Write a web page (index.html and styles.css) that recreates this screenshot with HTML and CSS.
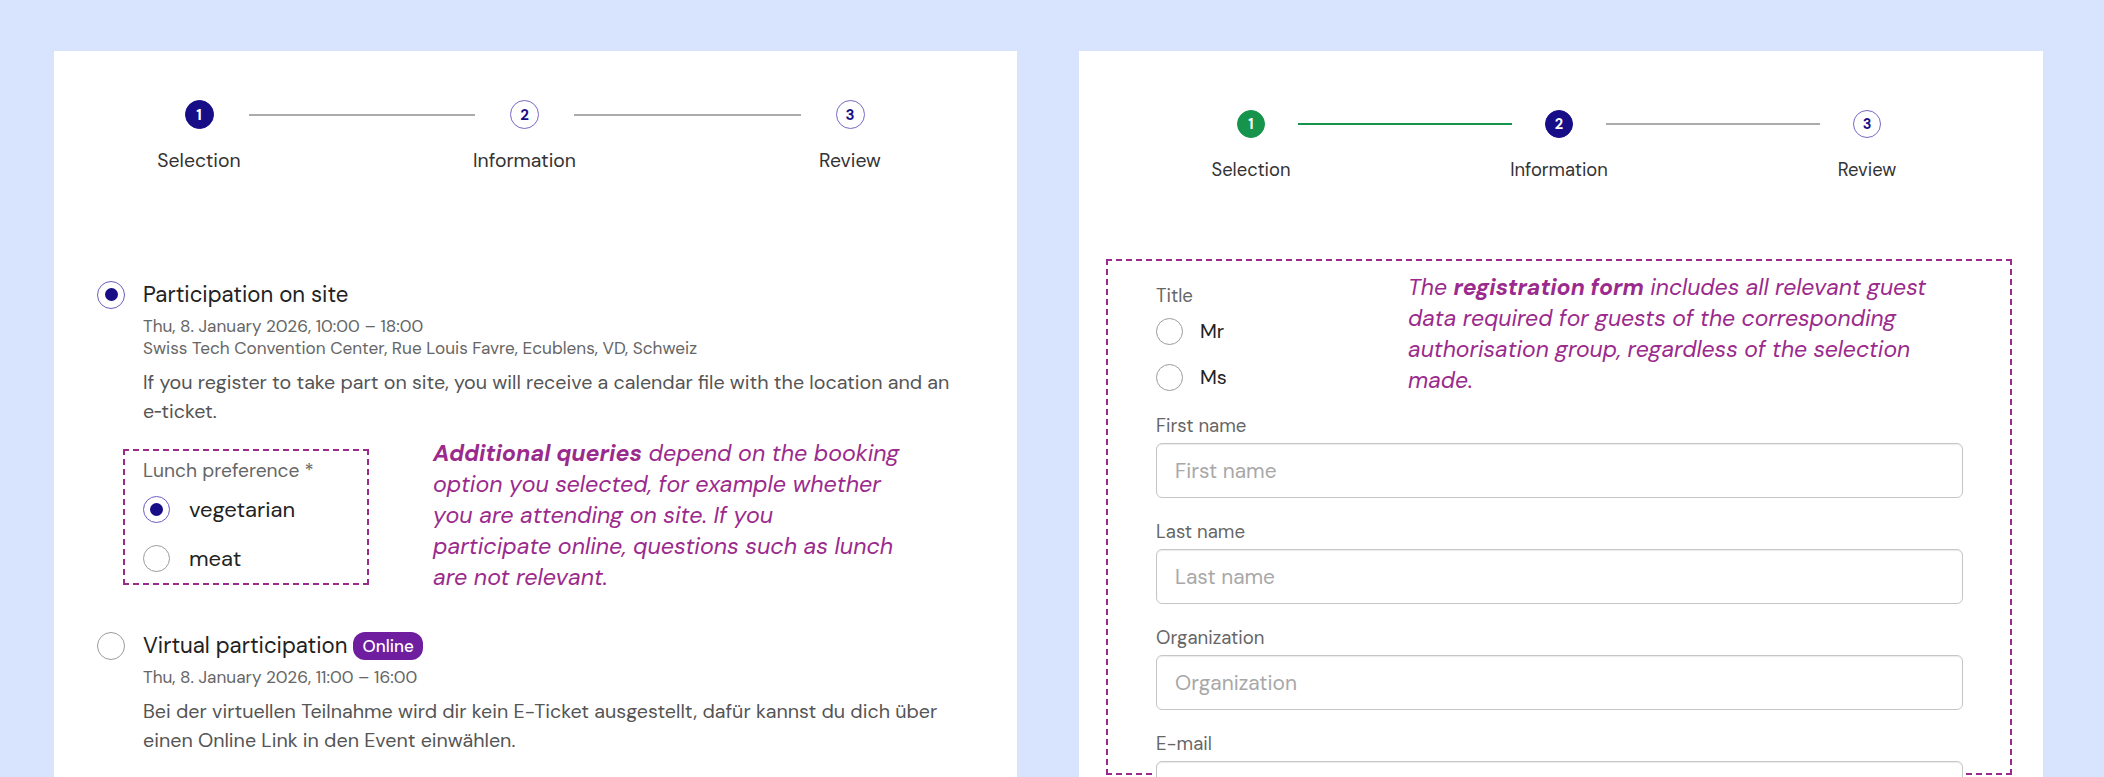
FILE: index.html
```html
<!DOCTYPE html>
<html lang="en">
<head>
<meta charset="utf-8">
<title>Event registration</title>
<link rel="stylesheet" href="styles.css">
</head>
<body>
<main class="page">
  <section class="card card-left">
    <ol class="stepper stepper-left">
      <li class="step step-current"><span class="step-circle">1</span><span class="step-label">Selection</span></li>
      <li class="connector"></li>
      <li class="step"><span class="step-circle">2</span><span class="step-label">Information</span></li>
      <li class="connector"></li>
      <li class="step"><span class="step-circle">3</span><span class="step-label">Review</span></li>
    </ol>

    <div class="option option-first">
      <div class="option-head">
        <span class="radio radio-checked"></span>
        <div class="option-body">
          <div class="option-title">Participation on site</div>
          <div class="option-meta">Thu, 8. January 2026, 10:00 – 18:00<br>Swiss Tech Convention Center, Rue Louis Favre, Ecublens, VD, Schweiz</div>
          <p class="option-desc">If you register to take part on site, you will receive a calendar file with the location and an e&#8209;ticket.</p>
        </div>
      </div>
      <div class="extra-row">
        <div class="lunch-box">
          <div class="field-label">Lunch preference *</div>
          <div class="radio-row"><span class="radio radio-sm radio-checked"></span><span class="radio-text">vegetarian</span></div>
          <div class="radio-row"><span class="radio radio-sm"></span><span class="radio-text">meat</span></div>
        </div>
        <p class="note note-left"><strong>Additional queries</strong> depend on the booking<br>option you selected, for example whether<br>you are attending on site. If you<br>participate online, questions such as lunch<br>are not relevant.</p>
      </div>
    </div>

    <div class="option option-second">
      <div class="option-head">
        <span class="radio"></span>
        <div class="option-body">
          <div class="option-title">Virtual participation <span class="badge">Online</span></div>
          <div class="option-meta">Thu, 8. January 2026, 11:00 – 16:00</div>
          <p class="option-desc">Bei der virtuellen Teilnahme wird dir kein E-Ticket ausgestellt, dafür kannst du dich über einen Online Link in den Event einwählen.</p>
        </div>
      </div>
    </div>
  </section>

  <section class="card card-right">
    <ol class="stepper stepper-right">
      <li class="step step-done"><span class="step-circle">1</span><span class="step-label">Selection</span></li>
      <li class="connector connector-done"></li>
      <li class="step step-current"><span class="step-circle">2</span><span class="step-label">Information</span></li>
      <li class="connector"></li>
      <li class="step"><span class="step-circle">3</span><span class="step-label">Review</span></li>
    </ol>

    <div class="form-box">
      <div class="title-row">
        <div class="title-group">
          <div class="field-label">Title</div>
          <div class="radio-row radio-row-title"><span class="radio radio-sm"></span><span class="radio-text">Mr</span></div>
          <div class="radio-row radio-row-title"><span class="radio radio-sm"></span><span class="radio-text">Ms</span></div>
        </div>
        <p class="note note-right">The <strong>registration form</strong> includes all relevant guest<br>data required for guests of the corresponding<br>authorisation group, regardless of the selection<br>made.</p>
      </div>
      <div class="field">
        <div class="field-label">First name</div>
        <input class="text-input" type="text" placeholder="First name">
      </div>
      <div class="field">
        <div class="field-label">Last name</div>
        <input class="text-input" type="text" placeholder="Last name">
      </div>
      <div class="field">
        <div class="field-label">Organization</div>
        <input class="text-input" type="text" placeholder="Organization">
      </div>
      <div class="field">
        <div class="field-label">E-mail</div>
        <input class="text-input" type="text" placeholder="E-mail">
      </div>
    </div>
  </section>
</main>
</body>
</html>
```

FILE: styles.css
```css
html, body {
  margin: 0;
  padding: 0;
  overflow: hidden;
  background: #d8e3fd;
}

body {
  font-family: "DM Sans", Inter, "Liberation Sans", sans-serif;
  color: #222;
}

.page {
  display: flex;
  align-items: flex-start;
  gap: 62px;
  padding: 51px 0 0 54px;
}

.card {
  background: #fff;
  min-height: 820px;
  box-sizing: border-box;
}

.card-left {
  width: 963px;
  padding: 49px 43px 0 43px;
}

.card-right {
  width: 964px;
  padding: 59px 80px 0 77px;
}

/* Stepper */
.stepper {
  list-style: none;
  margin: 0;
  padding: 0;
  display: flex;
  align-items: flex-start;
}

.stepper-left {
  margin: 0 74.5px 0 52.5px;
}

.stepper-right {
  margin: 0 49px 0 48px;
}

.step {
  display: flex;
  flex-direction: column;
  align-items: center;
  flex: none;
}

.stepper-left .step { width: 99px; }
.stepper-right .step { width: 94px; }

.step-circle {
  box-sizing: border-box;
  display: flex;
  align-items: center;
  justify-content: center;
  border-radius: 50%;
  border: 1.5px solid #7569c6;
  color: #170d87;
  background: #fff;
  font-size: 15px;
  font-weight: 700;
}

.stepper-left .step-circle { width: 29px; height: 29px; }
.stepper-right .step-circle { width: 28px; height: 28px; font-size: 14.5px; }

.step-current .step-circle {
  background: #170d87;
  border-color: #170d87;
  color: #fff;
}

.step-done .step-circle {
  background: #17944c;
  border-color: #17944c;
  color: #fff;
}

.step-label {
  white-space: nowrap;
  color: #333;
}

.stepper-left .step-label {
  margin-top: 20px;
  font-size: 19.4px;
  line-height: 24px;
}

.stepper-right .step-label {
  margin-top: 20.5px;
  font-size: 18.4px;
  line-height: 23px;
}

.connector {
  flex: 1;
  height: 2px;
  background: #ababab;
}

.stepper-left .connector { margin-top: 13.5px; }
.stepper-right .connector { margin-top: 13px; }

.connector-done { background: #17944c; }

/* Radios */
.radio {
  box-sizing: border-box;
  flex: none;
  width: 28px;
  height: 28px;
  border-radius: 50%;
  border: 1.5px solid #9c9c9c;
  background: #fff;
  display: flex;
  align-items: center;
  justify-content: center;
}

.radio-sm {
  width: 27px;
  height: 27px;
}

.radio-checked {
  border-color: #6b5dc0;
}

.radio-checked::after {
  content: "";
  width: 13px;
  height: 13px;
  border-radius: 50%;
  background: #170d87;
}

/* Options */
.option-first {
  margin-top: 107.5px;
}

.option-second {
  margin-top: 39px;
}

.option-head {
  display: flex;
  align-items: flex-start;
}

.option-body {
  margin-left: 18px;
  flex: 1;
}

.option-title {
  font-size: 22.2px;
  line-height: 28px;
  color: #222;
  display: flex;
  align-items: center;
}

.badge {
  display: inline-flex;
  align-items: center;
  height: 28px;
  padding: 0 9px;
  margin-left: 6px;
  border-radius: 12px;
  background: #6e1e9f;
  color: #fff;
  font-size: 17px;
  font-weight: 500;
}

.option-meta {
  margin-top: 6.5px;
  font-size: 17.2px;
  line-height: 22px;
  color: #666;
}

.option-desc {
  margin: 8.5px 0 0 0;
  font-size: 19.7px;
  line-height: 29.6px;
  color: #555;
}

.extra-row {
  display: flex;
  align-items: center;
  margin: 11px 0 0 26px;
  gap: 64px;
}

.lunch-box {
  box-sizing: border-box;
  width: 246px;
  margin-top: 4px;
  border: 2px dashed #9b2a8d;
  padding: 9.5px 14px 4px 18px;
}

.field-label {
  font-size: 18.6px;
  line-height: 22px;
  color: #666;
}

.lunch-box .field-label {
  font-size: 19.2px;
  margin-bottom: 6px;
}

.radio-row {
  display: flex;
  align-items: center;
  height: 42px;
}

.radio-row + .radio-row {
  margin-top: 7px;
}

.radio-text {
  margin-left: 19px;
  font-size: 22px;
  color: #222;
}

.note {
  margin: 0;
  font-style: italic;
  color: #9b2a8d;
}

.note strong {
  font-weight: 700;
}

.note-left {
  width: 500px;
  font-size: 23.2px;
  line-height: 31px;
}

/* Right form */
.form-box {
  box-sizing: border-box;
  height: 516px;
  margin: 77.5px -49px 0 -50px;
  padding: 8px 47px 0 48px;
  border: 2px dashed #9b2a8d;
}

.title-row {
  display: flex;
  align-items: flex-start;
}

.title-group {
  width: 252px;
  flex: none;
  margin-top: 16px;
}

.title-group .field-label {
  margin-bottom: 4px;
}

.radio-row-title {
  height: 40px;
}

.radio-row-title + .radio-row-title {
  margin-top: 6px;
}

.radio-row-title .radio-text {
  margin-left: 17px;
  font-size: 20px;
}

.note-right {
  width: 545px;
  margin-top: 2.5px;
  font-size: 22.9px;
  line-height: 31.3px;
}

.field {
  margin-bottom: 23px;
}

.title-row + .field {
  margin-top: 18px;
}

.field .field-label {
  margin-bottom: 6px;
}

.text-input {
  display: block;
  box-sizing: border-box;
  width: 100%;
  height: 55px;
  margin: 0;
  padding: 0 18px;
  border: 1px solid #c6c6c6;
  border-radius: 6px;
  box-shadow: inset 0 1px 1px rgba(0, 0, 0, 0.08);
  background: #fff;
  font-family: inherit;
  font-size: 20.9px;
  color: #222;
  outline: none;
}

.text-input::placeholder {
  color: #a8a8a8;
}
```
